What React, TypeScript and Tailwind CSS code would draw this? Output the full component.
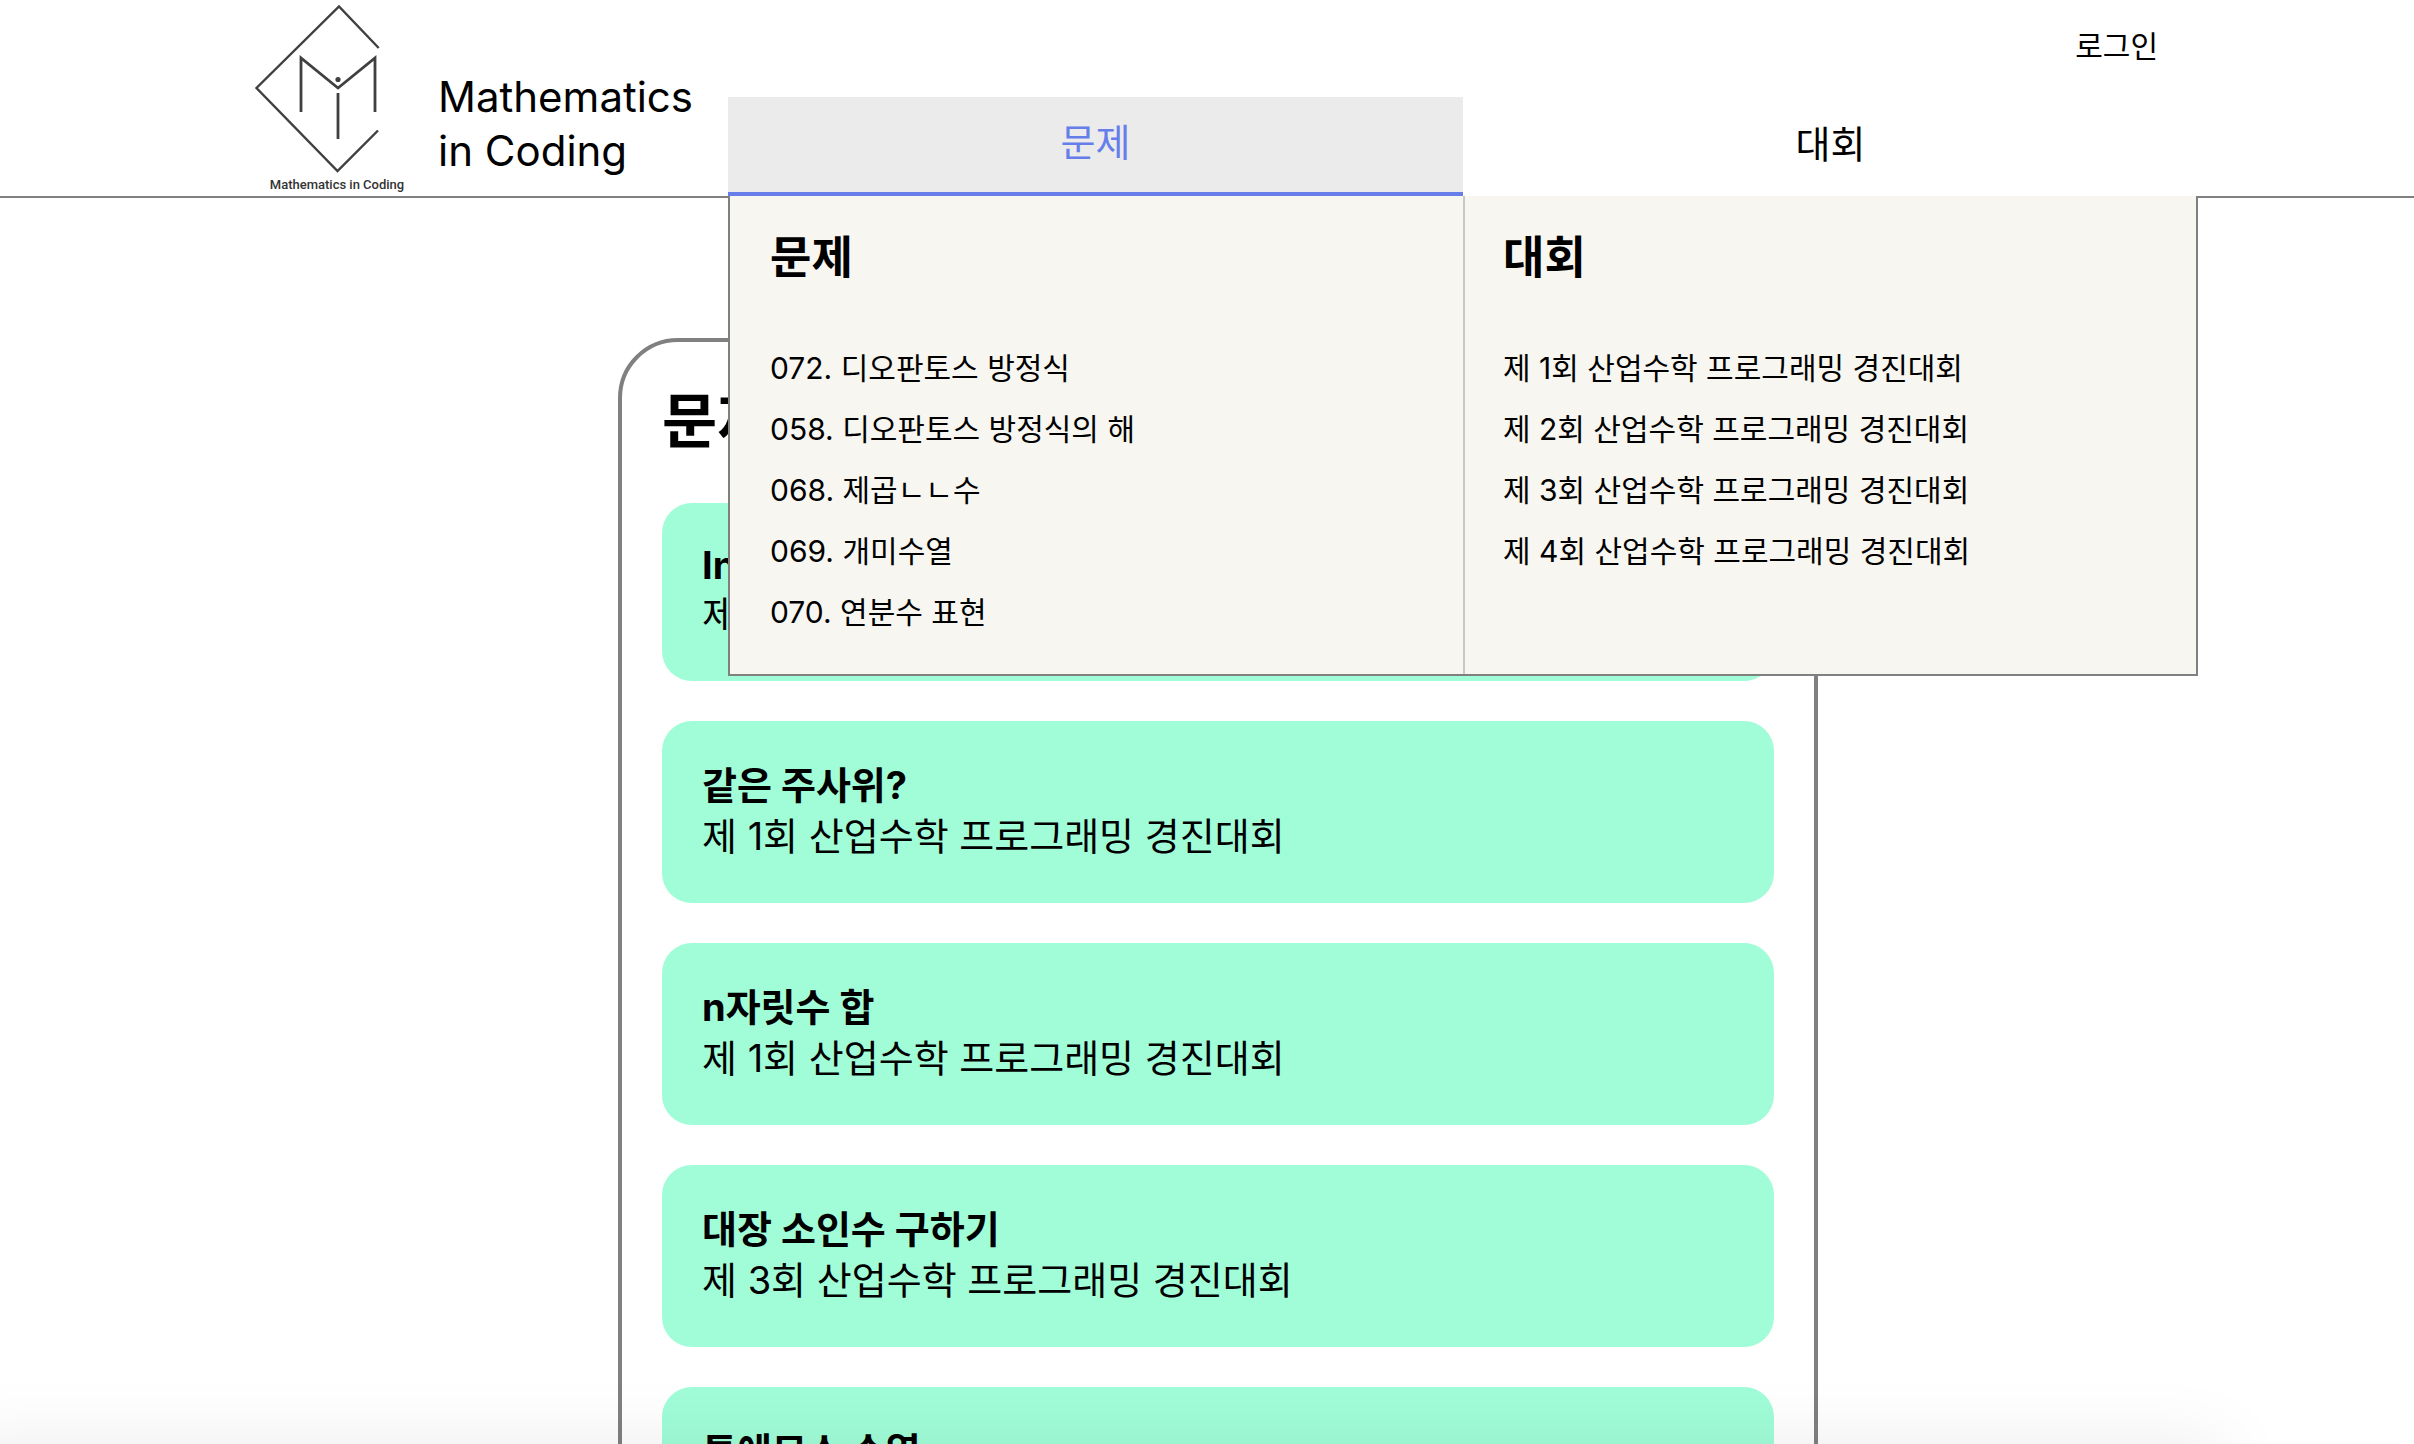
const problems = [
  '072. 디오판토스 방정식',
  '058. 디오판토스 방정식의 해',
  '068. 제곱ㄴㄴ수',
  '069. 개미수열',
  '070. 연분수 표현',
];

const contests = [
  '제 1회 산업수학 프로그래밍 경진대회',
  '제 2회 산업수학 프로그래밍 경진대회',
  '제 3회 산업수학 프로그래밍 경진대회',
  '제 4회 산업수학 프로그래밍 경진대회',
];

const cards = [
  { title: 'In', contest: contests[0], lead: 'leading-[47px]' },
  { title: '같은 주사위?', contest: contests[0], lead: 'leading-[51px]' },
  { title: 'n자릿수 합', contest: contests[0], lead: 'leading-[51px]' },
  { title: '대장 소인수 구하기', contest: contests[2], lead: 'leading-[51px]' },
  { title: '투에모스 수열', contest: contests[0], lead: 'leading-[51px]' },
];

function Logo() {
  return (
    <svg
      viewBox="0 0 200 196"
      className="h-[196px] w-[200px] shrink-0"
      fill="none"
      stroke="#404040"
      strokeWidth="2.4"
      role="img"
      aria-label="Mathematics in Coding"
    >
      <path d="M140.7 48 L101 6.5 L18.5 88 L99.5 171 L140 130.5" />
      <path d="M63 112 V58 L100 88 L137 58 V112" strokeWidth="2.8" />
      <path d="M100 93 V139" strokeWidth="2.8" />
      <circle cx="100" cy="79.5" r="2.6" fill="#404040" stroke="none" />
      <text x="99" y="189" textAnchor="middle" fill="#333333" stroke="none" className="font-[Roboto,sans-serif] text-[13px] font-medium">
        Mathematics in Coding
      </text>
    </svg>
  );
}

function MenuColumn({ title, items, className }: { title: string; items: string[]; className: string }) {
  return (
    <section className={className}>
      <h2 className="text-[45px] leading-[64px] font-bold">{title}</h2>
      <ul className="mt-12">
        {items.map((item) => (
          <li key={item}>
            <a href="#" className="block text-[30px] leading-[61px] whitespace-nowrap">
              {item}
            </a>
          </li>
        ))}
      </ul>
    </section>
  );
}

export default function App() {
  return (
    <div className="relative h-screen overflow-hidden bg-white font-[Inter,'Noto_Sans_CJK_KR',sans-serif] text-black">
      <header className="border-b-2 border-[#808080] pl-[22px]">
        <div className="mx-auto flex h-[196px] max-w-[1960px]">
          <a href="#" className="flex shrink-0">
            <Logo />
            <span className="mt-[70px] block w-[290px] text-[42px] leading-[54px]">
              Mathematics
              <br />
              in Coding
            </span>
          </a>
          <div className="flex grow flex-col justify-between">
            <a href="#" className="mt-6 mr-10 self-end text-[30px] leading-[44px]">
              로그인
            </a>
            <nav className="relative grid h-[99px] grid-cols-2 text-[38px]">
              <button type="button" className="border-b-4 border-[#667eea] bg-[#ebebeb] pb-1 text-[#667eea]">
                문제
              </button>
              <button type="button" className="pb-1">대회</button>
              <div className="absolute inset-x-0 top-full z-10 grid h-[480px] grid-cols-2 border-x-2 border-b-2 border-[#808080] bg-[#f7f6f1]">
                <MenuColumn title="문제" items={problems} className="pt-[30px] pl-10" />
                <MenuColumn title="대회" items={contests} className="border-l-2 border-[#c8c8c5] pt-[30px] pl-[38px]" />
              </div>
            </nav>
          </div>
        </div>
      </header>

      <main className="pl-[22px]">
        <div className="mx-auto mt-[140px] max-w-[1200px] rounded-[60px] border-4 border-[#808080] px-10 pb-10">
          <h1 className="pt-9 text-[60px] leading-[86px] font-bold">문제</h1>
          <ul className="mt-[39px] flex flex-col gap-10">
            {cards.map((card) => (
              <li key={card.title}>
                <a href="#" className="block rounded-[30px] bg-[#a0fdd8] px-10 pt-[39px] pb-[41px] text-[38px]">
                  <strong className={`block font-bold ${card.lead}`}>{card.title}</strong>
                  <span className="block leading-[51px]">{card.contest}</span>
                </a>
              </li>
            ))}
          </ul>
        </div>
      </main>

      <div className="pointer-events-none absolute top-full right-[190px] -left-10 h-40 shadow-[0_0_76px_0_rgba(0,0,0,0.08)]" />
    </div>
  );
}
